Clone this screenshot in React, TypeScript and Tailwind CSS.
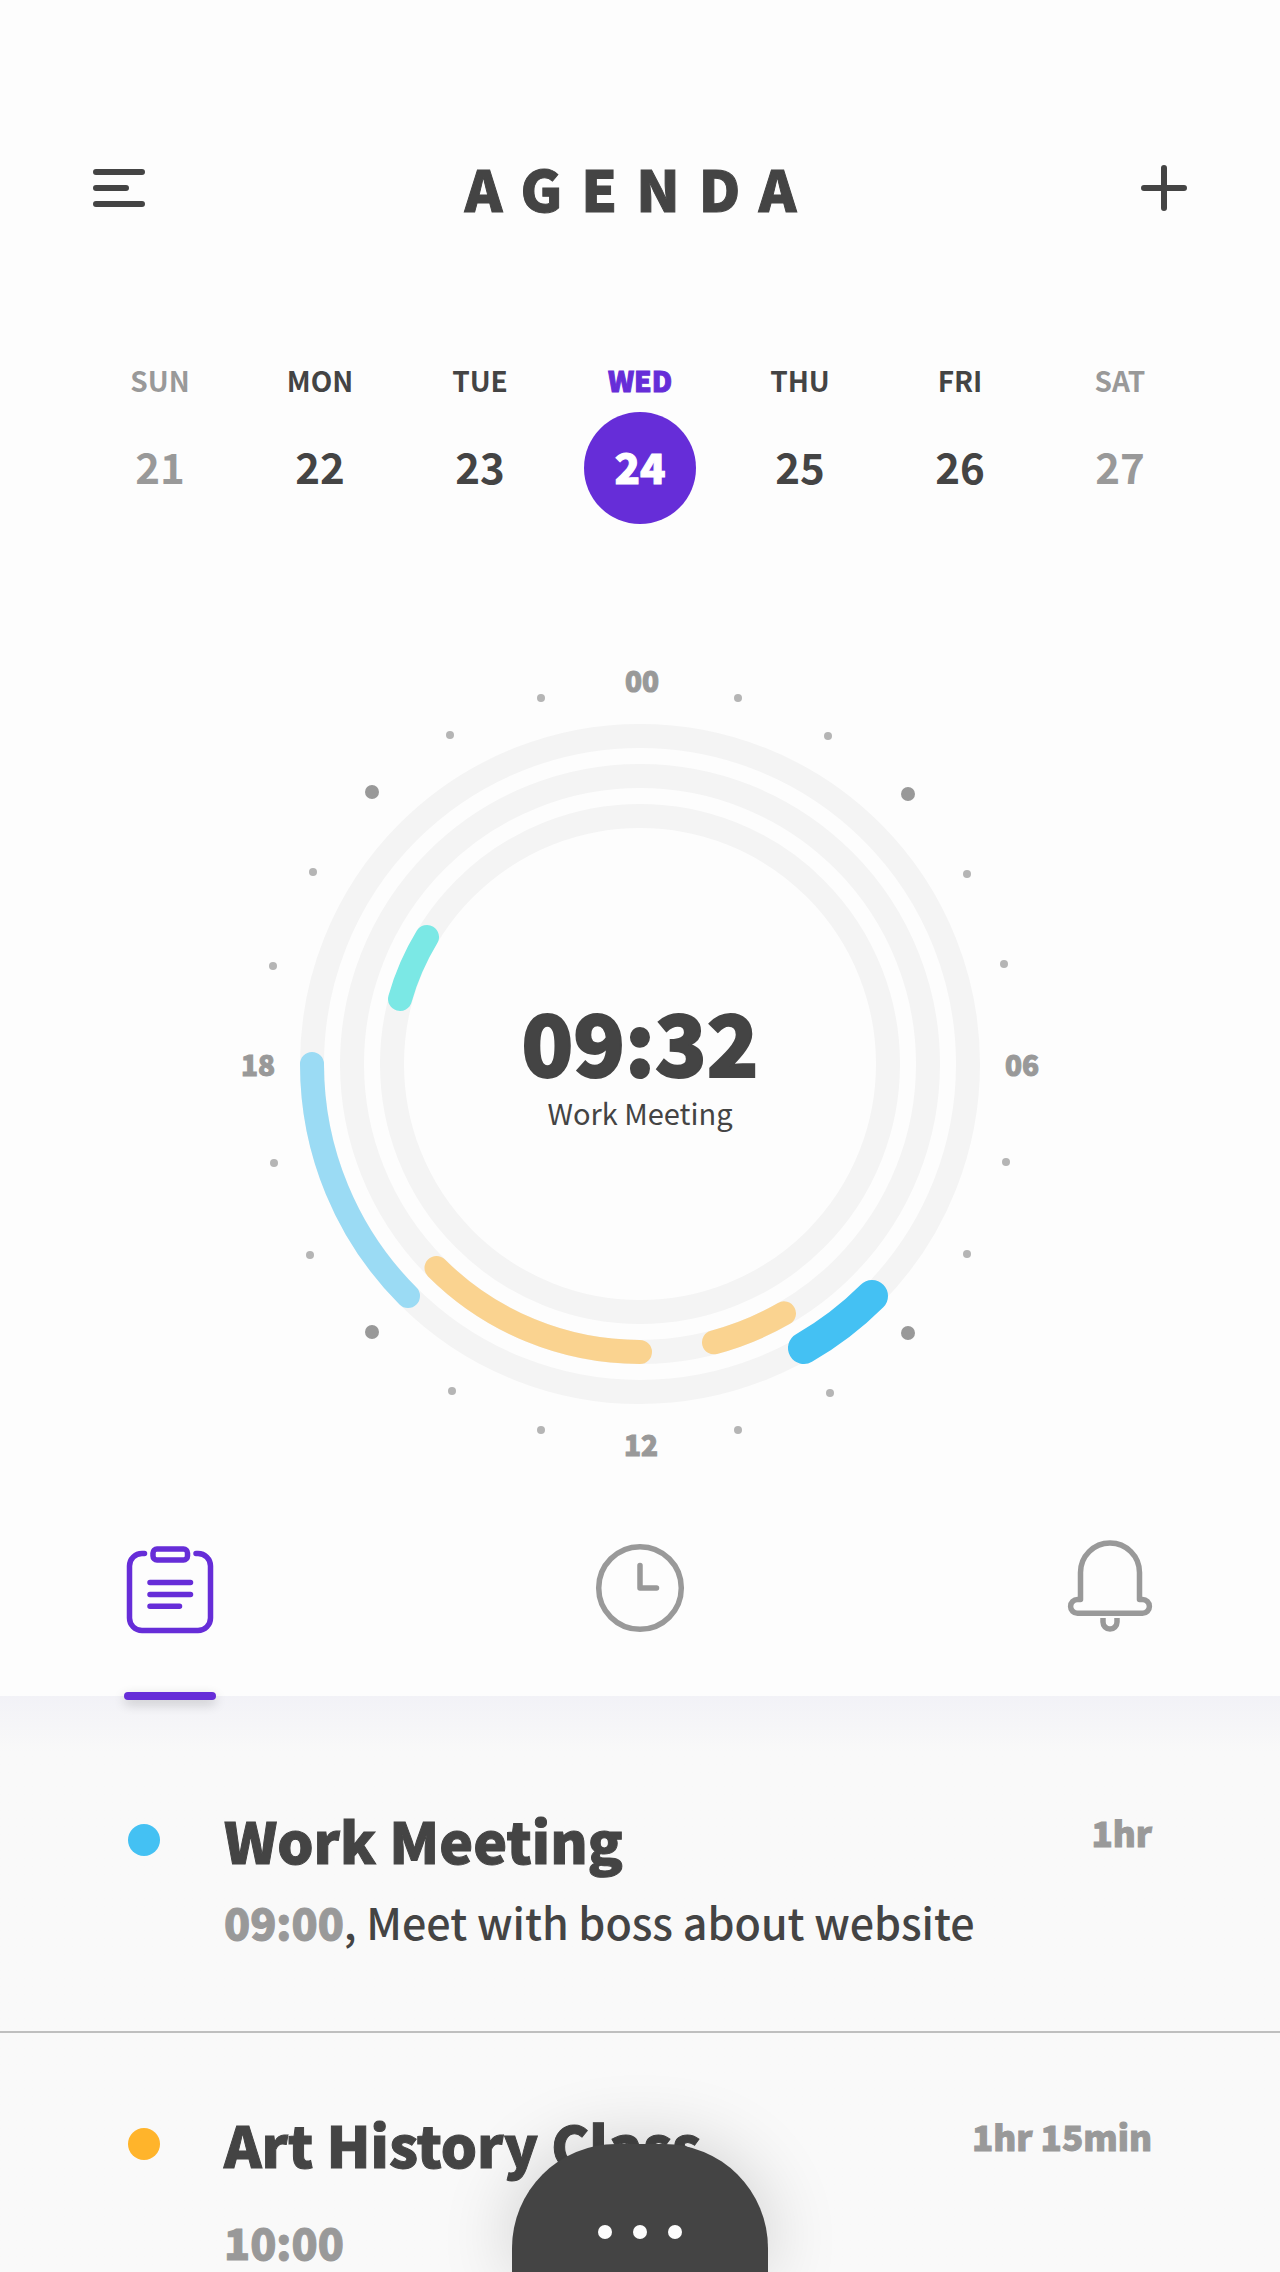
import React from "react";

type Day = { name: string; date: number; tone: "muted" | "normal" | "active" };

const days: Day[] = [
  { name: "SUN", date: 21, tone: "muted" },
  { name: "MON", date: 22, tone: "normal" },
  { name: "TUE", date: 23, tone: "normal" },
  { name: "WED", date: 24, tone: "active" },
  { name: "THU", date: 25, tone: "normal" },
  { name: "FRI", date: 26, tone: "normal" },
  { name: "SAT", date: 27, tone: "muted" },
];

const labelTone = {
  muted: "font-bold text-[#999]",
  normal: "font-bold text-[#444]",
  active: "font-black text-[#662dd8] [-webkit-text-stroke:1px]",
};

const dateTone = {
  muted: "font-bold text-[#999]",
  normal: "font-bold text-[#444]",
  active: "font-black bg-[#662dd8] text-white [-webkit-text-stroke:1px]",
};

const minorTicks = [
  [541, 698], [450, 735], [313, 872], [273, 966],
  [738, 698], [828, 736], [967, 874], [1004, 964],
  [274, 1163], [310, 1255], [452, 1391], [541, 1430],
  [1006, 1162], [967, 1254], [830, 1393], [738, 1430],
];

const majorTicks = [[372, 792], [908, 794], [372, 1332], [908, 1333]];

const arcs = [
  { d: "M400 999A248 248 0 0 1 427 937", color: "#7be8e5", width: 24 },
  { d: "M408 1296A328 328 0 0 1 312 1064", color: "#9bdbf4", width: 24 },
  { d: "M640 1352A288 288 0 0 1 436.500 1268", color: "#fad390", width: 24 },
  { d: "M784 1313.400A288 288 0 0 1 714 1342.300", color: "#fad390", width: 24 },
  { d: "M872 1296A328 328 0 0 1 804 1348", color: "#44c1f3", width: 32 },
];

const hours = [
  { text: "00", x: 642, y: 692 },
  { text: "06", x: 1022, y: 1076 },
  { text: "12", x: 641, y: 1456 },
  { text: "18", x: 258, y: 1076 },
];

function Header() {
  return (
    <header className="flex items-center justify-between px-[93px] pt-[155px]">
      <button type="button" aria-label="Open menu" className="h-16 w-[52px]">
        <svg viewBox="0 0 52 64" className="h-16 w-[52px]" stroke="#444" strokeWidth="6" strokeLinecap="round">
          <path d="M3 17H49M3 33H33M3 49H49" />
        </svg>
      </button>
      <h1 className="text-[57px] leading-[64px] font-black tracking-[19px] [-webkit-text-stroke:1px]">AGENDA</h1>
      <button type="button" aria-label="Add event" className="flex h-16 w-[52px] justify-end">
        <svg viewBox="0 0 46 64" className="h-16 w-[46px]" stroke="#444" strokeWidth="6" strokeLinecap="round">
          <path d="M3 33H43M23 13V53" />
        </svg>
      </button>
    </header>
  );
}

function Week() {
  return (
    <nav aria-label="Week" className="mx-20 mt-36 grid grid-cols-7">
      {days.map((day) => (
        <button
          key={day.name}
          type="button"
          aria-pressed={day.tone === "active"}
          className="flex flex-col items-center gap-[15px]"
        >
          <span className={`text-[28px] leading-[34px] ${labelTone[day.tone]}`}>{day.name}</span>
          <span
            className={`flex size-28 items-center justify-center rounded-full pb-1 text-[42px] leading-none ${dateTone[day.tone]}`}
          >
            {day.date}
          </span>
        </button>
      ))}
    </nav>
  );
}

function Dial() {
  return (
    <section aria-label="Day overview" className="relative mx-auto mt-[126px] w-[840px] max-w-full">
      <svg viewBox="220 650 840 820" className="block w-full" fill="none">
        <g stroke="#f4f4f4" strokeWidth="24">
          <circle cx="640" cy="1064" r="328" />
          <circle cx="640" cy="1064" r="288" />
          <circle cx="640" cy="1064" r="248" />
        </g>
        {arcs.map((arc) => (
          <path key={arc.d} d={arc.d} stroke={arc.color} strokeWidth={arc.width} strokeLinecap="round" />
        ))}
        {minorTicks.map(([x, y]) => (
          <circle key={`${x}-${y}`} cx={x} cy={y} r="4" fill="#b5b5b5" />
        ))}
        {majorTicks.map(([x, y]) => (
          <circle key={`${x}-${y}`} cx={x} cy={y} r="7" fill="#999" />
        ))}
        {hours.map((hour) => (
          <text
            key={hour.text}
            x={hour.x}
            y={hour.y}
            textAnchor="middle"
            fill="#999"
            stroke="#999"
            strokeWidth="1"
            className="text-[28px] font-black"
          >
            {hour.text}
          </text>
        ))}
      </svg>
      <div className="absolute inset-0 flex flex-col items-center justify-center gap-2.5 pt-2.5">
        <p className="text-[85px] leading-[84px] font-black [-webkit-text-stroke:2px]">09:32</p>
        <p className="text-[29px] leading-10">Work Meeting</p>
      </div>
    </section>
  );
}

function Tabs() {
  return (
    <div role="tablist" className="relative z-10 flex justify-between px-[124px] pt-[70px]">
      <button type="button" role="tab" aria-selected="true" aria-label="Events" className="relative h-[156px] w-[92px] pb-[60px]">
        <svg viewBox="124 1540 92 96" className="h-24 w-[92px]" fill="none" stroke="#662dd8" strokeWidth="5.500" strokeLinecap="round" strokeLinejoin="round">
          <path d="M144.500 1553.500H142A12.500 12.500 0 0 0 129.500 1566V1618A12.500 12.500 0 0 0 142 1630.500H198A12.500 12.500 0 0 0 210.500 1618V1566A12.500 12.500 0 0 0 198 1553.500H196" />
          <rect x="153" y="1549" width="34.500" height="11" rx="4" />
          <path d="M150 1582.500H190.500M150 1594.500H190.500M150 1606.300H179.500" />
        </svg>
        <span className="absolute inset-x-0 -bottom-1 h-2 rounded-full bg-[#662dd8] shadow-[0_4px_12px_rgba(0,0,0,0.2)]" />
      </button>
      <button type="button" role="tab" aria-selected="false" aria-label="Time" className="h-[156px] w-[92px] pb-[60px]">
        <svg viewBox="594 1540 92 96" className="h-24 w-[92px]" fill="none" stroke="#999" strokeWidth="5.500" strokeLinecap="round" strokeLinejoin="round">
          <circle cx="640" cy="1588" r="41.300" />
          <path d="M640 1565.500V1588H656.500" />
        </svg>
      </button>
      <button type="button" role="tab" aria-selected="false" aria-label="Notifications" className="h-[156px] w-[92px] pb-[60px]">
        <svg viewBox="1064 1540 92 96" className="h-24 w-[92px]" fill="none" stroke="#999" strokeWidth="5.500" strokeLinejoin="round">
          <path d="M1080.500 1599.500V1572.500A29.500 29.500 0 0 1 1139.500 1572.500V1599.500H1142.500A6.900 6.900 0 0 1 1142.500 1613.300H1077.500A6.900 6.900 0 0 1 1077.500 1599.500Z" />
          <path d="M1103 1618V1622A7 7 0 0 0 1117 1622V1618" />
        </svg>
      </button>
    </div>
  );
}

function Events() {
  return (
    <ul className="bg-[#f9f9f9] bg-linear-to-b from-[#f2f2f7] to-[#f9f9f9] to-[56px]">
      <li className="flex items-start border-b-2 border-[#bfbfbf] px-32 pt-[111px] pb-[82px]">
        <span className="mt-[17px] mr-16 size-8 shrink-0 rounded-full bg-[#44c1f3]" />
        <div className="grow">
          <h2 className="text-[57px] leading-[64px] font-black [-webkit-text-stroke:1px]">Work Meeting</h2>
          <p className="mt-[22px] text-[43px] leading-[56px] font-medium">
            <time className="font-black text-[#999] [-webkit-text-stroke:1px]">09:00</time>, Meet with boss about website
          </p>
        </div>
        <span className="text-[35px] leading-[50px] font-black whitespace-nowrap text-[#999] [-webkit-text-stroke:1px]">1hr</span>
      </li>
      <li className="flex items-start px-32 pt-[78px] pb-[3px]">
        <span className="mt-[17px] mr-16 size-8 shrink-0 rounded-full bg-[#ffb42b]" />
        <div className="grow">
          <h2 className="text-[57px] leading-[64px] font-black [-webkit-text-stroke:1px]">Art History Class</h2>
          <p className="mt-[38px] text-[43px] leading-[56px] font-medium">
            <time className="font-black text-[#999] [-webkit-text-stroke:1px]">10:00</time>
          </p>
        </div>
        <span className="text-[35px] leading-[50px] font-black whitespace-nowrap text-[#999] [-webkit-text-stroke:1px]">1hr 15min</span>
      </li>
    </ul>
  );
}

export default function App() {
  return (
    <main className="min-h-screen bg-[#fdfdfd] font-['Noto_Sans_CJK_SC',sans-serif] text-[#444]">
      <Header />
      <Week />
      <Dial />
      <Tabs />
      <Events />
      <button
        type="button"
        aria-label="More options"
        className="fixed bottom-0 left-1/2 z-20 flex h-32 w-64 -translate-x-1/2 items-end justify-center gap-[21px] rounded-t-[104px] bg-[#444] pb-[33px] shadow-[0_0_72px_rgba(0,0,0,0.18)]"
      >
        <span className="size-3.5 rounded-full bg-[#fdfdfd]" />
        <span className="size-3.5 rounded-full bg-[#fdfdfd]" />
        <span className="size-3.5 rounded-full bg-[#fdfdfd]" />
      </button>
    </main>
  );
}
